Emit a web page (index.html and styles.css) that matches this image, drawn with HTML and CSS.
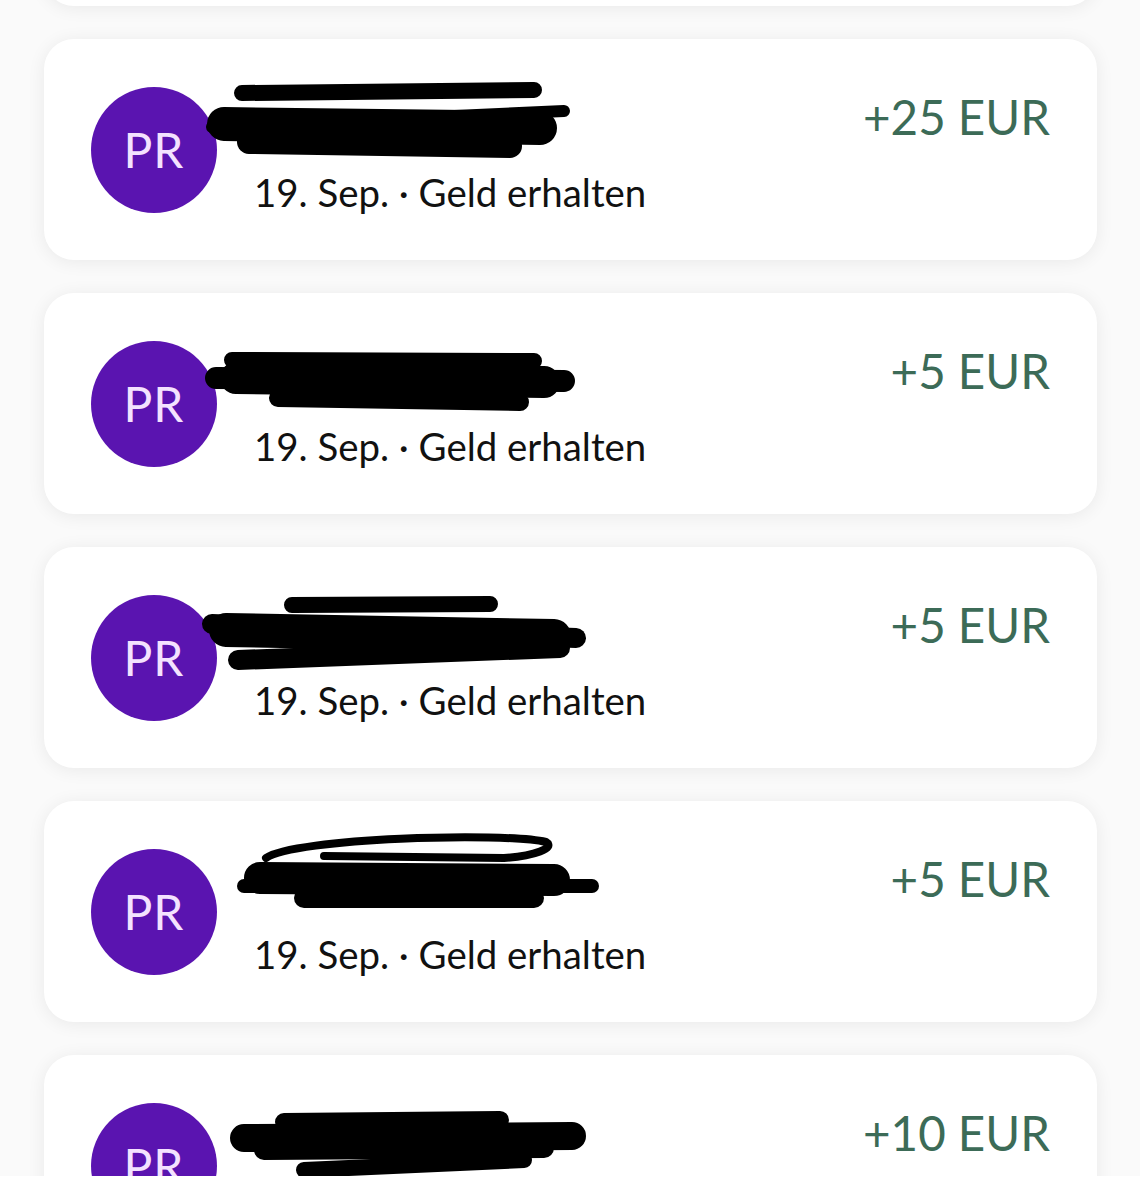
FILE: index.html
```html
<!DOCTYPE html>
<html lang="de">
<head>
<meta charset="utf-8">
<title>Aktivitäten</title>
<link rel="stylesheet" href="styles.css">
</head>
<body>
<main class="list">
  <div class="card card-ghost"></div>

  <div class="card">
    <div class="avatar">PR</div>
    <div class="info">
      <svg class="redact" width="380" height="80" viewBox="0 0 380 80">
        <g stroke="#000" stroke-linecap="round" fill="none">
          <line x1="38" y1="13" x2="330" y2="10" stroke-width="16"/>
          <line x1="8" y1="47" x2="360" y2="31" stroke-width="12"/>
          <line x1="20" y1="44" x2="336" y2="48" stroke-width="34"/>
          <line x1="45" y1="62" x2="306" y2="66" stroke-width="24"/>
        </g>
      </svg>
      <div class="meta">19. Sep. · Geld erhalten</div>
    </div>
    <div class="amount">+25 EUR</div>
  </div>

  <div class="card">
    <div class="avatar">PR</div>
    <div class="info">
      <svg class="redact" width="380" height="80" viewBox="0 0 380 80">
        <g stroke="#000" stroke-linecap="round" fill="none">
          <line x1="28" y1="26" x2="330" y2="27" stroke-width="16"/>
          <line x1="12" y1="44" x2="360" y2="47" stroke-width="22"/>
          <line x1="32" y1="44" x2="340" y2="48" stroke-width="32"/>
          <line x1="74" y1="64" x2="316" y2="68" stroke-width="18"/>
        </g>
      </svg>
      <div class="meta">19. Sep. · Geld erhalten</div>
    </div>
    <div class="amount">+5 EUR</div>
  </div>

  <div class="card">
    <div class="avatar">PR</div>
    <div class="info">
      <svg class="redact" width="380" height="80" viewBox="0 0 380 80">
        <g stroke="#000" stroke-linecap="round" fill="none">
          <line x1="88" y1="17" x2="286" y2="16" stroke-width="16"/>
          <line x1="8" y1="36" x2="372" y2="50" stroke-width="20"/>
          <line x1="22" y1="42" x2="350" y2="48" stroke-width="34"/>
          <line x1="34" y1="72" x2="356" y2="60" stroke-width="20"/>
        </g>
      </svg>
      <div class="meta">19. Sep. · Geld erhalten</div>
    </div>
    <div class="amount">+5 EUR</div>
  </div>

  <div class="card">
    <div class="avatar">PR</div>
    <div class="info">
      <svg class="redact" width="380" height="80" viewBox="0 0 380 80">
        <g stroke="#000" stroke-linecap="round" fill="none">
          <path d="M62 16 C 90 -4, 300 -10, 342 0 C 352 6, 330 14, 300 16 L 120 14" stroke-width="8"/>
          <line x1="40" y1="44" x2="388" y2="44" stroke-width="14"/>
          <line x1="56" y1="36" x2="350" y2="38" stroke-width="32"/>
          <line x1="100" y1="56" x2="330" y2="56" stroke-width="20"/>
        </g>
      </svg>
      <div class="meta">19. Sep. · Geld erhalten</div>
    </div>
    <div class="amount">+5 EUR</div>
  </div>

  <div class="card">
    <div class="avatar">PR</div>
    <div class="info">
      <svg class="redact" width="380" height="80" viewBox="0 0 380 80">
        <g stroke="#000" stroke-linecap="round" fill="none">
          <line x1="80" y1="26" x2="296" y2="24" stroke-width="18"/>
          <line x1="40" y1="42" x2="368" y2="40" stroke-width="28"/>
          <line x1="60" y1="54" x2="340" y2="52" stroke-width="20"/>
          <line x1="100" y1="74" x2="320" y2="64" stroke-width="16"/>
        </g>
      </svg>
      <div class="meta">19. Sep. · Geld erhalten</div>
    </div>
    <div class="amount">+10 EUR</div>
  </div>
</main>
<div class="bottom-bar"></div>
</body>
</html>
```

FILE: styles.css
```css
* { box-sizing: border-box; }

html, body {
  margin: 0;
  padding: 0;
  background: #fafafa;
  overflow: hidden;
}

body {
  font-family: Lato, "Open Sans", "Noto Sans", sans-serif;
  color: #111;
}

.list {
  display: flex;
  flex-direction: column;
  gap: 33px;
  padding: 0 43px 0 44px;
  margin-top: -215px;
}

.card {
  height: 221px;
  background: #fff;
  border-radius: 30px;
  box-shadow: 0 2px 18px rgba(0, 0, 0, 0.07);
  display: flex;
  align-items: center;
  padding: 0 47px;
}

.avatar {
  width: 126px;
  height: 126px;
  flex: none;
  border-radius: 50%;
  background: #5a14b0;
  color: #f4e2ff;
  font-size: 48px;
  display: flex;
  align-items: center;
  justify-content: center;
  letter-spacing: 1px;
}

.info {
  flex: 1;
  display: flex;
  flex-direction: column;
  margin-left: 37px;
  align-self: stretch;
  justify-content: center;
}

.redact {
  display: block;
  margin-left: -50px;
  overflow: visible;
  position: relative;
}

.meta {
  font-size: 38.4px;
  line-height: 54px;
  margin-top: 5px;
  color: #111;
  white-space: nowrap;
}

.amount {
  align-self: flex-start;
  margin-top: 50px;
  font-size: 47.5px;
  line-height: 56px;
  color: #3c6b57;
  white-space: nowrap;
}

.bottom-bar {
  position: fixed;
  left: 0;
  right: 0;
  bottom: 0;
  height: 24px;
  background: #fff;
}
```
